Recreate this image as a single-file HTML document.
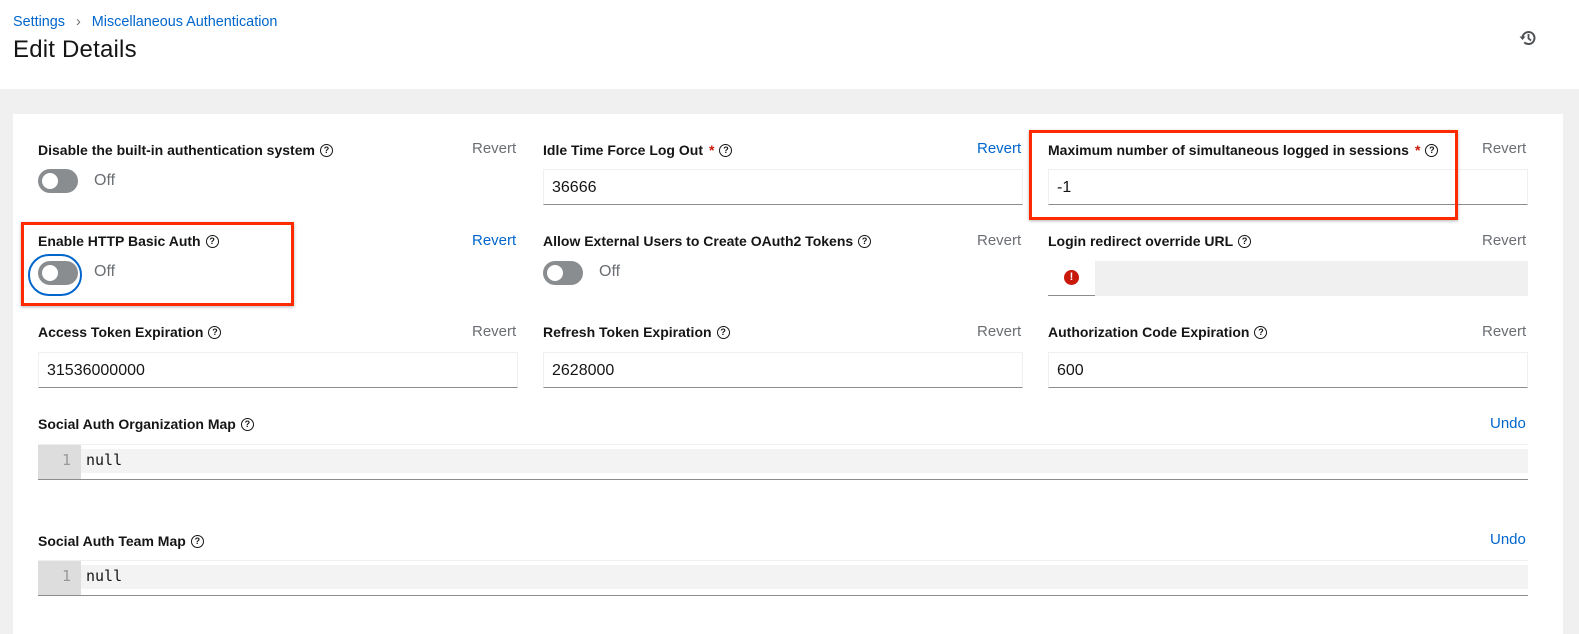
<!DOCTYPE html>
<html><head><style>
*{box-sizing:border-box;margin:0;padding:0}
body{width:1579px;height:619px;overflow:hidden;background:#f0f0f0;font-family:"Liberation Sans",sans-serif;position:relative;color:#151515}
.hdr{position:absolute;left:0;top:0;width:1579px;height:89px;background:#fff}
.bc{position:absolute;left:13px;top:14px;font-size:14.4px;color:#0066cc}
.bc span{color:#6a6e73;margin:0 11px}
h1{position:absolute;left:13px;top:36px;font-size:24px;font-weight:normal;color:#151515;letter-spacing:0.2px}
.card{position:absolute;left:13px;top:114px;width:1550px;height:520px;background:#fff}
.a{position:absolute}
.lbl{font-size:14px;font-weight:bold;color:#151515;white-space:nowrap;line-height:16px}
.rv{font-size:15px;color:#6a6e73}
.bl{color:#0066cc}
.q{display:inline-block;width:13px;height:13px;border:1.2px solid #151515;border-radius:50%;font-size:9px;text-align:center;line-height:11px;font-weight:bold;margin-left:5px;vertical-align:top;margin-top:2px}
.star{color:#c9190b;margin-left:6px}
.inp{height:36px;border:1px solid #f0f0f0;border-bottom:1px solid #8a8d90;font-size:16px;padding:8px;line-height:20px}
.tg{width:40px;height:24px;border-radius:12px;background:#8a8d90}
.tg:after{content:"";position:absolute;left:4px;top:4px;width:16px;height:16px;border-radius:50%;background:#fff}
.off{font-size:16px;color:#6a6e73}
.ed{height:36px;border-top:1px solid #f0f0f0;border-bottom:1px solid #8a8d90;background:#fff}
.ed .g{position:absolute;left:0;top:0;width:43px;height:34px;background:#ddd;color:#999;font-family:"DejaVu Sans Mono",monospace;font-size:15px;text-align:right;padding:6px 10px 0 0}
.ed .l{position:absolute;left:43px;top:4px;right:0;height:24px;background:#f3f3f3;font-family:"DejaVu Sans Mono",monospace;font-size:15px;padding:2px 5px}
.red{position:absolute;border:3px solid #ff2a00;box-shadow:0 1px 3px rgba(0,0,0,.3)}
</style></head><body>
<div class="hdr">
<div class="bc">Settings<span>›</span>Miscellaneous Authentication</div>
<h1>Edit Details</h1>
<svg class="a" style="left:1519px;top:29px" width="18" height="18" viewBox="0 0 18 18"><path d="M3.5 9a6 6 0 1 1 1.8 4.3" fill="none" stroke="#4f5255" stroke-width="2"/><path d="M0.5 7.5h6l-3 3.5z" fill="#4f5255"/><path d="M9.5 5v4.5l2.5 2" fill="none" stroke="#4f5255" stroke-width="1.8"/></svg>
</div>
<div class="card"></div>

<div class="a lbl" style="left:38px;top:142px">Disable the built-in authentication system<span class="q">?</span></div>
<div class="a rv" style="left:472px;top:140px">Revert</div>
<div class="a tg" style="left:38px;top:169px"></div>
<div class="a off" style="left:94px;top:172px">Off</div>

<div class="a lbl" style="left:543px;top:142px">Idle Time Force Log Out<span class="star">*</span><span class="q">?</span></div>
<div class="a rv bl" style="left:977px;top:140px">Revert</div>
<div class="a inp" style="left:543px;top:169px;width:480px">36666</div>

<div class="a lbl" style="left:1048px;top:142px">Maximum number of simultaneous logged in sessions<span class="star">*</span><span class="q">?</span></div>
<div class="a rv" style="left:1482px;top:140px">Revert</div>
<div class="a inp" style="left:1048px;top:169px;width:480px">-1</div>

<div class="a lbl" style="left:38px;top:233px">Enable HTTP Basic Auth<span class="q">?</span></div>
<div class="a rv bl" style="left:472px;top:232px">Revert</div>
<div class="a" style="left:28px;top:254px;width:54px;height:42px;border:2px solid #0066cc;border-radius:21px"></div>
<div class="a tg" style="left:38px;top:261px"></div>
<div class="a off" style="left:94px;top:263px">Off</div>

<div class="a lbl" style="left:543px;top:233px">Allow External Users to Create OAuth2 Tokens<span class="q">?</span></div>
<div class="a rv" style="left:977px;top:232px">Revert</div>
<div class="a tg" style="left:543px;top:261px"></div>
<div class="a off" style="left:599px;top:263px">Off</div>

<div class="a lbl" style="left:1048px;top:233px">Login redirect override URL<span class="q">?</span></div>
<div class="a rv" style="left:1482px;top:232px">Revert</div>
<div class="a" style="left:1048px;top:261px;width:480px;height:35px;background:#f0f0f0"></div>
<div class="a" style="left:1048px;top:261px;width:47px;height:35px;background:#fff;border-bottom:1px solid #8a8d90"></div>
<div class="a" style="left:1064px;top:270px;width:15px;height:15px;border-radius:50%;background:#c9190b;color:#fff;font-size:11px;font-weight:bold;text-align:center;line-height:15px">!</div>

<div class="a lbl" style="left:38px;top:324px">Access Token Expiration<span class="q">?</span></div>
<div class="a rv" style="left:472px;top:323px">Revert</div>
<div class="a inp" style="left:38px;top:352px;width:480px">31536000000</div>
<div class="a lbl" style="left:543px;top:324px">Refresh Token Expiration<span class="q">?</span></div>
<div class="a rv" style="left:977px;top:323px">Revert</div>
<div class="a inp" style="left:543px;top:352px;width:480px">2628000</div>
<div class="a lbl" style="left:1048px;top:324px">Authorization Code Expiration<span class="q">?</span></div>
<div class="a rv" style="left:1482px;top:323px">Revert</div>
<div class="a inp" style="left:1048px;top:352px;width:480px">600</div>

<div class="a lbl" style="left:38px;top:416px">Social Auth Organization Map<span class="q">?</span></div>
<div class="a rv bl" style="left:1490px;top:415px">Undo</div>
<div class="a ed" style="left:38px;top:444px;width:1490px"><div class="g">1</div><div class="l">null</div></div>

<div class="a lbl" style="left:38px;top:533px">Social Auth Team Map<span class="q">?</span></div>
<div class="a rv bl" style="left:1490px;top:531px">Undo</div>
<div class="a ed" style="left:38px;top:560px;width:1490px"><div class="g">1</div><div class="l">null</div></div>

<div class="red" style="left:21px;top:222px;width:273px;height:84px"></div>
<div class="red" style="left:1029px;top:130px;width:429px;height:90px"></div>
</body></html>
